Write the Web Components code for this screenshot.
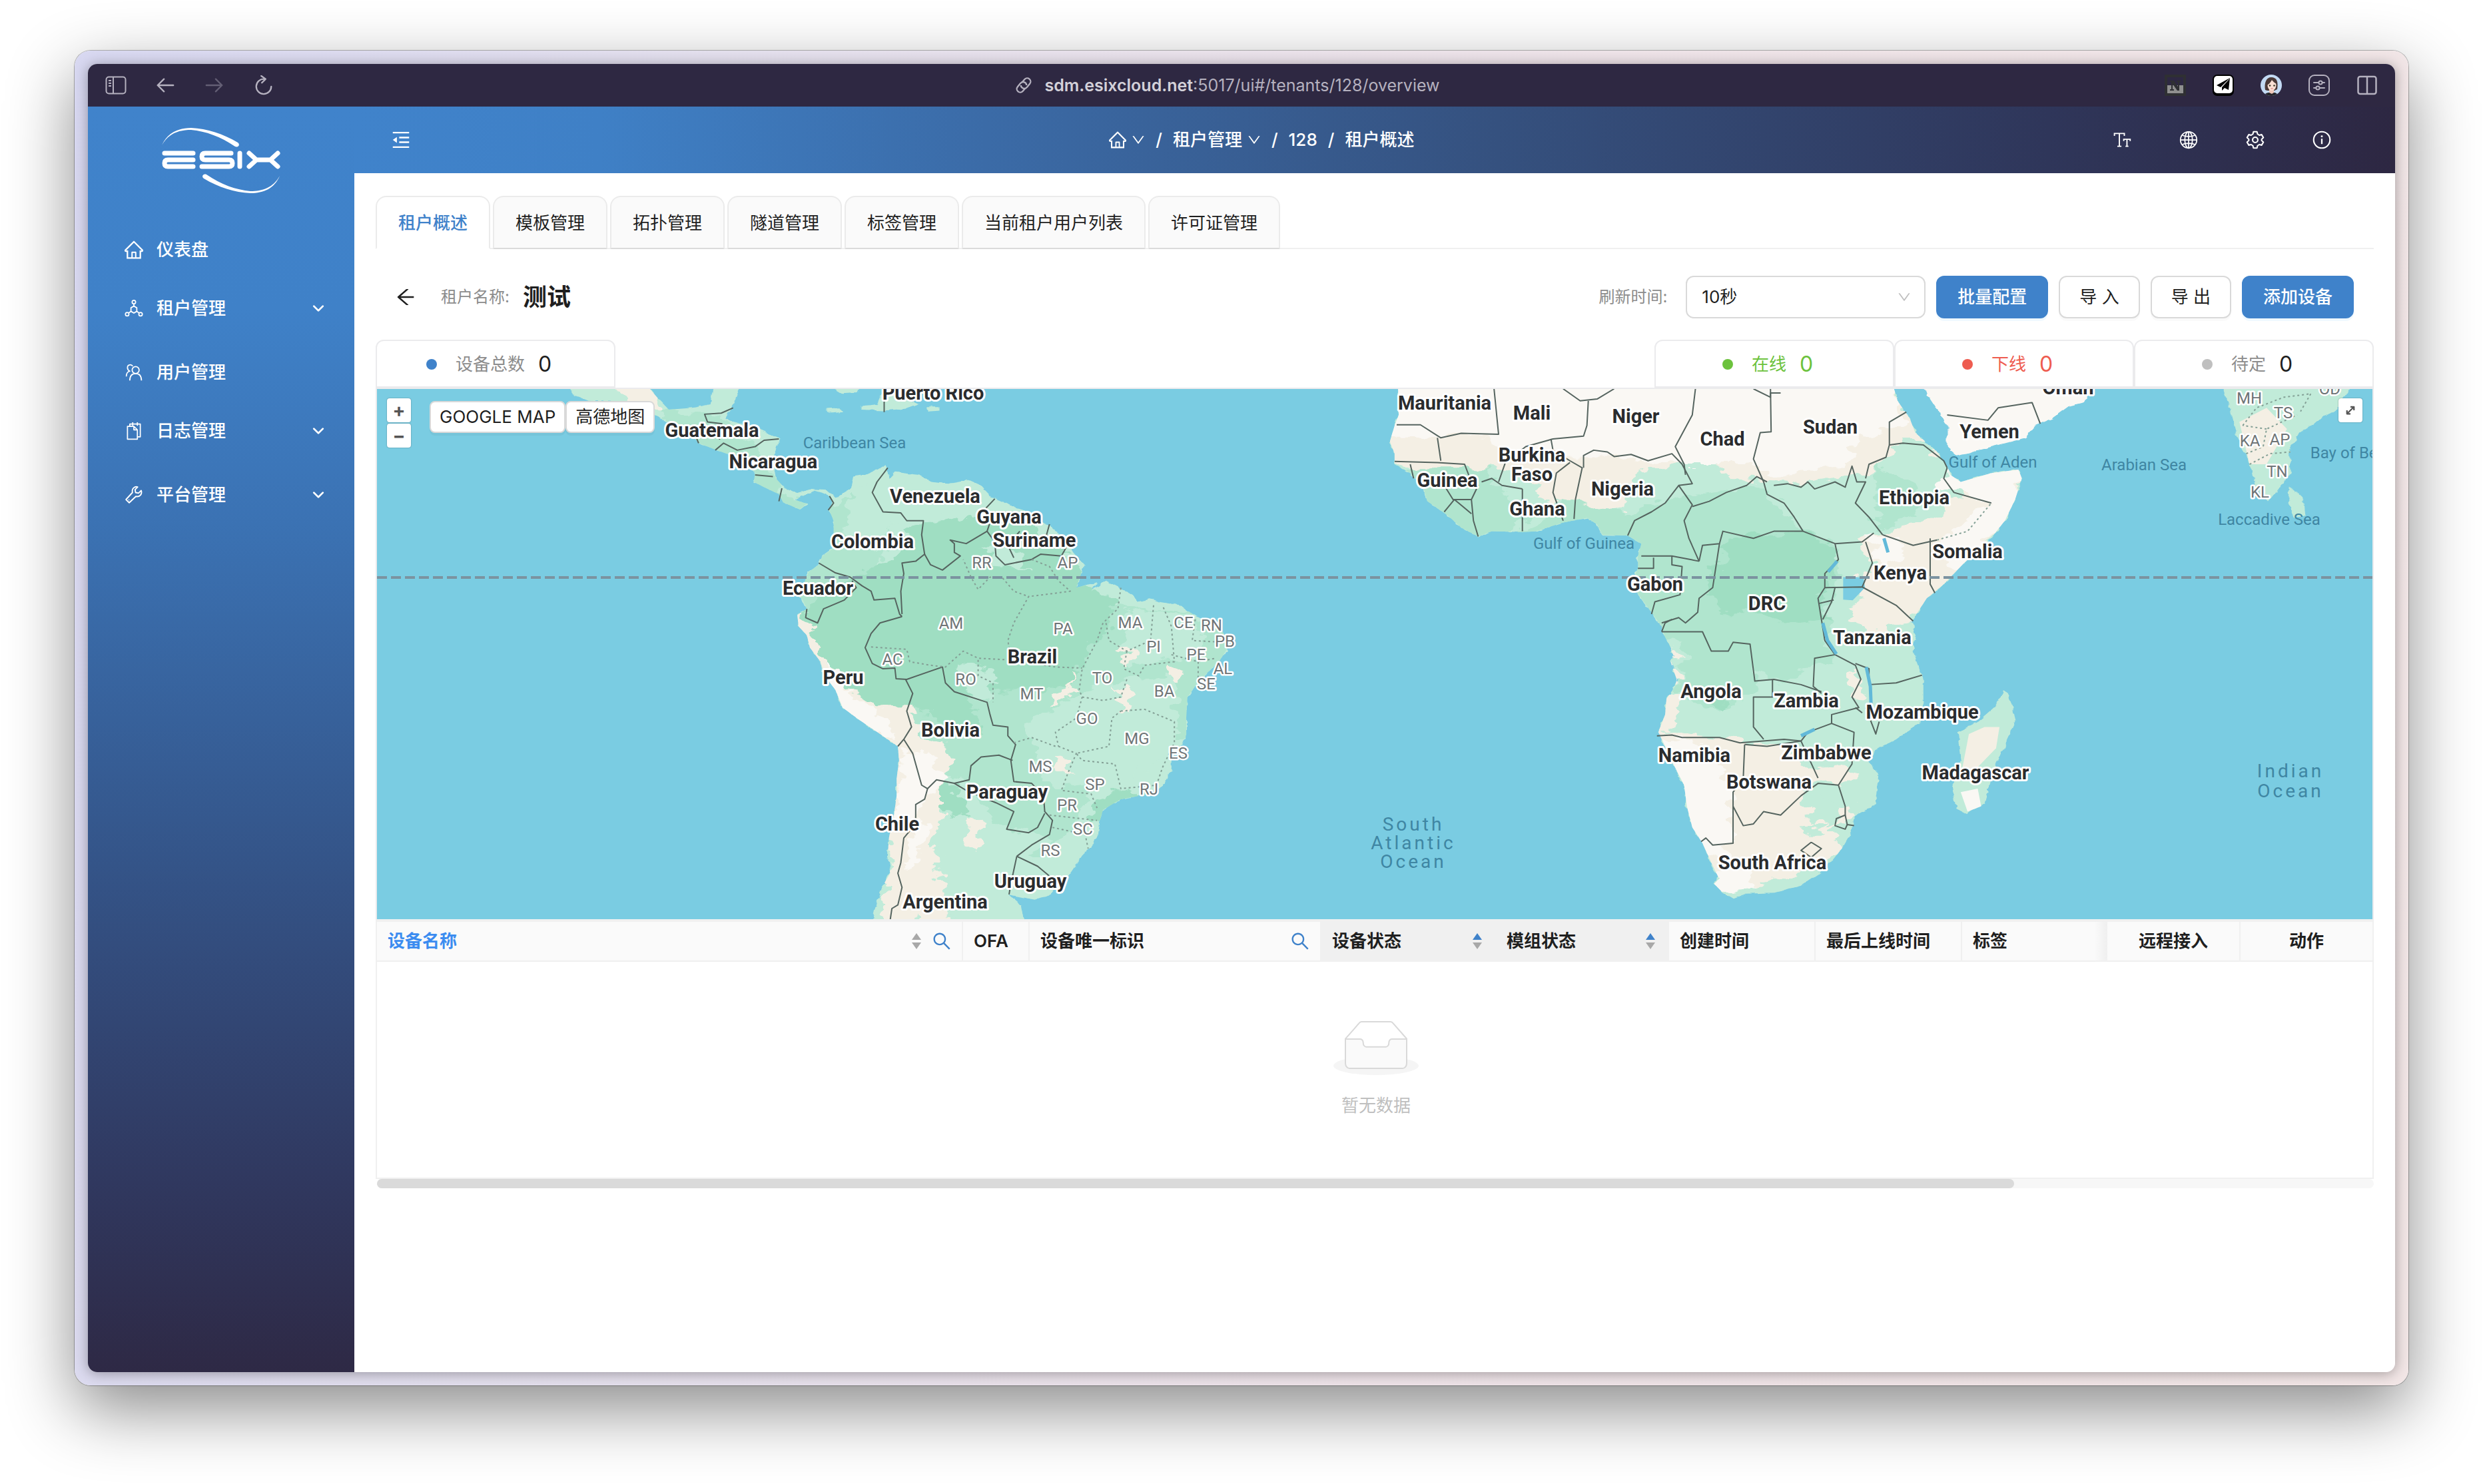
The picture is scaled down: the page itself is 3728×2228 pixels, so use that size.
<!DOCTYPE html>
<html lang="zh-CN">
<head>
<meta charset="utf-8">
<title>租户概述</title>
<style>
  html, body { margin: 0; min-height: 100%; }
  body {
    box-sizing: border-box; min-height: 100vh; display: flex; background: #fff;
    padding: 76px 112px 148px; color: #1f1f1f;
    font: 26px/40px Inter, "Noto Sans CJK SC", sans-serif;
    --brand: #3f82ca; --line: #ebebed;
  }
  browser-window { flex: 1; min-width: 0; }
</style>
</head>
<body>
<browser-window>
  <browser-toolbar slot="toolbar"></browser-toolbar>
  <app-sidebar slot="side">
    <nav-item icon="home">仪表盘</nav-item>
    <nav-item icon="tenants" sub>租户管理</nav-item>
    <nav-item icon="users">用户管理</nav-item>
    <nav-item icon="logs" sub>日志管理</nav-item>
    <nav-item icon="wrench" sub>平台管理</nav-item>
  </app-sidebar>
  <app-header></app-header>
  <tenant-overview></tenant-overview>
</browser-window>

<script>
const ANT = 'viewBox="64 64 896 896" fill="currentColor"';
const LINE = 'viewBox="0 0 32 32" fill="none" stroke="currentColor" stroke-width="2" stroke-linejoin="round"';
const ICONS = {
  home: [ANT, '<path d="M946.5 505L560.1 118.8l-25.9-25.9a31.5 31.5 0 00-44.4 0L77.5 505a63.9 63.9 0 00-18.8 46c.4 35.2 29.7 63.3 64.9 63.3h42.5V940h691.8V614.3h43.4c17.1 0 33.2-6.7 45.3-18.8a63.6 63.6 0 0018.7-45.3c0-17-6.7-33.1-18.8-45.2zM568 868H456V664h112v204zm217.9-325.7V868H632V640c0-22.1-17.9-40-40-40H432c-22.1 0-40 17.9-40 40v228H238.1V542.3h-96l370-369.7 23.1 23.1L882 542.3h-96.1z"/>'],
  down: [ANT, '<path d="M884 256h-75c-5.1 0-9.9 2.5-12.9 6.6L512 654.2 227.9 262.6c-3-4.1-7.8-6.6-12.9-6.6h-75c-6.5 0-10.3 7.4-6.5 12.7l352.6 486.1c12.8 17.6 39 17.6 51.7 0l352.6-486.1c3.9-5.3.1-12.7-6.4-12.7z"/>'],
  search: [ANT, '<path d="M909.6 854.5L649.9 594.8C690.2 542.7 712 479 712 412c0-80.2-31.3-155.4-87.9-212.1-56.6-56.7-132-87.9-212.1-87.9s-155.5 31.3-212.1 87.9C143.2 256.5 112 331.8 112 412c0 80.1 31.3 155.5 87.9 212.1C256.5 680.8 331.8 712 412 712c67 0 130.6-21.8 182.7-62l259.7 259.6a8.2 8.2 0 0011.6 0l43.6-43.5a8.2 8.2 0 000-11.6zM570.4 570.4C528 612.7 471.8 636 412 636s-116-23.3-158.4-65.6C211.3 528 188 471.8 188 412s23.3-116.1 65.6-158.4C296 211.3 352.2 188 412 188s116.1 23.2 158.4 65.6S636 352.2 636 412s-23.3 116.1-65.6 158.4z"/>'],
  back: [ANT, '<path d="M872 474H286.9l350.2-304c5.6-4.9 2.2-14-5.2-14h-88.5c-3.9 0-7.6 1.4-10.5 3.9L155 487.8a31.96 31.96 0 000 48.3L535.1 866c1.5 1.3 3.3 2 5.2 2h91.5c7.4 0 10.8-9.2 5.2-14L286.9 550H872c4.4 0 8-3.6 8-8v-60c0-4.4-3.6-8-8-8z"/>'],
  fold: [LINE, '<path d="M2 3.5h28M13 12h17M13 20h17M2 28.500h28" stroke-width="2.600"/><path d="M9 11v10L2 16z" fill="currentColor" stroke="none"/>'],
  tenants: [LINE, '<circle cx="16" cy="5" r="3"/><path d="M16 8v4"/><path d="M16 12l5 3v6l-5 3-5-3v-6z"/><path d="M11 21l-4 3M21 21l4 3"/><circle cx="4.500" cy="26" r="3"/><circle cx="27.500" cy="26" r="3"/>'],
  users: [LINE, '<circle cx="19" cy="12" r="6"/><path d="M9 30c0-8 4-12 10-12s10 4 10 12M14 5.500C12 2 5 2 5 8c0 3 2 5 4 6-4 1-6 4-6 9"/>'],
  logs: [LINE, '<path d="M5 8h11l6 6v16H5zM16 8v6h6"/><path d="M9 8V4h18v22h-5M14 1v6M22 1v6"/>'],
  wrench: [LINE, '<path d="M28.500 8.500l-4.500 4.500-5-1-1-5L22.500 2.500C18 1 12 4.500 13.500 12L2.500 24l5.500 5.500L19.500 18.500C27 20 30.500 14 28.500 8.500z" stroke-width="2.200"/><path d="M7 24l1 1"/>'],
  chevron: [LINE, '<path d="M4 10l12 12 12-12" stroke-width="5" stroke-linecap="round"/>'],
  panel: [LINE, '<rect x="1.500" y="3.500" width="29" height="25" rx="4"/><path d="M12 4v24M5 9h4M5 13h4M5 17h4"/>'],
  larrow: [LINE, '<path d="M29 16H4M14 6L4 16l10 10" stroke-width="2.500" stroke-linecap="round"/>'],
  rarrow: [LINE, '<path d="M3 16h25M18 6l10 10-10 10" stroke-width="2.500" stroke-linecap="round"/>'],
  reload: [LINE, '<path d="M17 6a12 12 0 1 0 11 12M12 1l7 5-6 6" stroke-width="2.500" stroke-linecap="round"/>'],
  link: [LINE, '<g transform="rotate(-50 16 16)" stroke-width="2.500"><path d="M14 21H8a5.500 5.500 0 0 1 0-11h7a5.500 5.500 0 0 1 4 9.500"/><path d="M18 11h6a5.500 5.500 0 0 1 0 11h-7a5.500 5.500 0 0 1-4-9.500"/></g>'],
  nbox: ['viewBox="0 0 32 32"', '<rect x="2" y="2" width="28" height="28" fill="none" stroke="#2f3033" stroke-width="4"/><rect x="4" y="16" width="24" height="12" fill="#8f8f8f"/><path d="M8 9h6l6 9V11h-2V9h6v2h-2v13h-3L12 14v8h2v2H8v-2h2V11H8z" fill="#2f3033"/>'],
  plane: ['viewBox="0 0 32 32"', '<rect width="32" height="32" rx="7" fill="#000"/><rect x="2" y="2" width="28" height="26" rx="5" fill="#fff"/><path d="M26 5L6 16l6 3zM26 5l-2 18-6-3-4 4v-5L24 8z" fill="#000"/>'],
  avatar: ['viewBox="0 0 32 32"', '<defs><clipPath id="c"><circle cx="16" cy="16" r="16"/></clipPath></defs><g clip-path="url(#c)"><path d="M0 0h32v32H0z" fill="#c3daf4"/><path d="M7 23C5 12 9 4 16 4c8 0 11 6 9 18l-4 2H10z" fill="#4b3a38"/><path d="M13 21h7v8h-7z" fill="#f0c9bb"/><ellipse cx="17" cy="16" rx="6.500" ry="8" fill="#f9ded3"/><path d="M9 16c3-1 6-4 8-8 2 3 5 5 7 6-1-8-5-9-8-9-5 0-8 5-7 11z" fill="#4b3a38"/><circle cx="14" cy="16.500" r="1.300" fill="#332"/><circle cx="20.500" cy="16.500" r="1.300" fill="#332"/><path d="M15.500 21h3" stroke="#d36b6b"/><path d="M5 32c1-4 6-5 8-5l4 2 3-2c3 0 6 2 7 5z" fill="#26262b"/></g>'],
  sliders: [LINE, '<rect x="1" y="1" width="30" height="30" rx="8"/><path d="M8 12h7M21 12h3M8 20h3M17 20h7" stroke-linecap="round"/><circle cx="18" cy="12" r="2.600"/><circle cx="14" cy="20" r="2.600"/>'],
  split: [LINE, '<rect x="2.500" y="3" width="27" height="26" rx="3" stroke-width="2.500"/><path d="M16 3v26" stroke-width="2.500"/>'],
  text: [LINE, '<path d="M3 9V5h17v4M11.500 5v22M8 27h7M19 18v-3h11v3M24.500 15v12M22 27h5" stroke-width="2.200" stroke-linejoin="miter"/>'],
  globe: [LINE, '<circle cx="16" cy="16" r="14"/><ellipse cx="16" cy="16" rx="6.500" ry="14"/><path d="M16 2v28M2 16h28M5 8c6 3 16 3 22 0M5 24c6-3 16-3 22 0"/>'],
  gear: [LINE, '<path d="M13 2h6l1 4 3 2 4-1 3 5-3 3v2l3 3-3 5-4-1-3 2-1 4h-6l-1-4-3-2-4 1-3-5 3-3v-2l-3-3 3-5 4 1 3-2z" stroke-width="2.400"/><circle cx="16" cy="16" r="4.500" stroke-width="2.400"/>'],
  info: [LINE, '<circle cx="16" cy="16" r="14" stroke-width="2.400"/><path d="M16 14v9" stroke-width="2.600"/><circle cx="16" cy="10" r="1.700" fill="currentColor" stroke="none"/>'],
  expand: [LINE, '<path d="M10 22L22 10M16 9h7v7M9 16v7h7" stroke-width="3"/>'],
};

const define = (name, render) => customElements.define(name, class extends HTMLElement {
  connectedCallback() {
    if (!this.shadowRoot) this.attachShadow({ mode: 'open' }).innerHTML = render(this);
  }
});

define('ui-icon', el => {
  const [attrs, body] = ICONS[el.getAttribute('name')];
  const size = el.getAttribute('size') || 28;
  return `<style>:host{display:block;flex:none;width:${size}px;height:${size}px}svg{display:block;width:100%;height:100%}</style><svg ${attrs} aria-hidden="true">${body}</svg>`;
});

define('browser-window', () => `
<style>
  :host { display: flex; box-sizing: border-box; padding: 20px; border-radius: 24px;
    background: linear-gradient(100deg, #d8d8f1, #e3dfed 25%, #eee3e8 60%, #f2e6e6);
    box-shadow: 0 0 0 1px rgba(0,0,0,.28), 0 36px 100px rgba(0,0,0,.46); }
  .page { flex: 1; min-width: 0; display: flex; flex-direction: column; overflow: hidden; border-radius: 14px; background: #fff; }
  .shell { flex: 1; min-width: 0; display: flex; border-radius: 14px; box-shadow: 0 2px 20px rgba(0,0,0,.34); }
  .body { flex: 1; display: flex; min-height: 0; }
  main { flex: 1; min-width: 0; display: flex; flex-direction: column; }
</style>
<div class="shell"><div class="page"><slot name="toolbar"></slot>
<div class="body"><slot name="side"></slot><main><slot></slot></main></div></div></div>`);

define('browser-toolbar', () => `
<style>
  :host { display: grid; grid-template-columns: 31fr auto 32fr; align-items: center; height: 64px; flex: none;
    padding: 0 26px; background: #2e2842; color: #b5b1bf; }
  div { display: flex; align-items: center; gap: 40px; }
  .url { gap: 16px; font-size: 25px; } .right { justify-content: flex-end; }
  button { all: unset; display: flex; width: 32px; justify-content: center; }
  .left { gap: 42px; }
  button:disabled { color: #635e74; }
  b { font-weight: 600; color: #d3d1d9; }
</style>
<div class="left"><button aria-label="侧栏"><ui-icon name="panel" size="32"></ui-icon></button>
<button aria-label="后退"><ui-icon name="larrow" size="30"></ui-icon></button>
<button aria-label="前进" disabled><ui-icon name="rarrow" size="30"></ui-icon></button>
<button aria-label="刷新"><ui-icon name="reload" size="30"></ui-icon></button></div>
<div class="url"><ui-icon name="link" size="30"></ui-icon><span><b>sdm.esixcloud.net</b>:5017/ui#/tenants/128/overview</span></div>
<div class="right">${['nbox', 'plane', 'avatar', 'sliders', 'split'].map(n => `<button aria-label="${n}"><ui-icon name="${n}" size="32"></ui-icon></button>`).join('')}</div>`);

define('app-sidebar', () => `
<style>
  :host { display: flex; flex-direction: column; flex: none; width: 400px; color: #fff;
    background: linear-gradient(#4083cb, #3f81c8 16%, #3b72b3 33%, #345488 60%, #30385f 85%, #2e2945); }
  .logo { display: block; width: 180px; height: 100px; margin: 32px auto 39px 111px; }
  nav { display: flex; flex-direction: column; }
</style>
<svg class="logo" viewBox="0 0 180 100" role="img" aria-label="ESIX" fill="none" stroke="#fff" stroke-width="7" stroke-linecap="round" stroke-linejoin="round">
  <path d="M0 26C8 8 24 0 44 0c24 1 48 9 70 22 4 3 1 8-4 6C88 13 66 5 44 3 26 3 10 8 0 26z" fill="#fff" stroke="none"/>
  <path d="M177 72c-8 19-24 26-44 26-24-1-48-9-70-22-4-3-1-8 4-6 22 15 44 23 66 25 18 0 34-5 44-23z" fill="#fff" stroke="none"/>
  <path d="M4 38h43M47 48H9q-5 0-5 5t5 5h38"/>
  <path d="M104 38H65q-5 0-5 5t5 5h36q5 0 5 5t-5 5H60"/>
  <path d="M117 38v20"/>
  <path d="M131 38l11 10-11 10M174 38l-11 10 11 10M142 48h21"/>
</svg>
<nav><slot></slot></nav>`);

define('nav-item', el => `
<style>
  :host { display: block; padding: 4px 0; } :host([sub]) { padding-bottom: 12px; }
  a { display: flex; align-items: center; height: 80px; padding: 0 45px 0 55px; gap: 20px; color: #fff; text-decoration: none; font-weight: 500; }
  span { flex: 1; }
</style>
<a href="#"><ui-icon name="${el.getAttribute('icon')}" size="28"></ui-icon><span><slot></slot></span>${el.hasAttribute('sub') ? '<ui-icon name="chevron" size="18"></ui-icon>' : ''}</a>`);

define('app-header', () => `
<style>
  :host { display: grid; grid-template-columns: 18fr auto 23fr; align-items: center; height: 100px; flex: none;
    padding: 0 96px 0 56px; color: #fff; font-weight: 500;
    background: linear-gradient(90deg, #4083cb, #3f80c6 12%, #3b6ba7 31%, #35517f 56%, #2f365a 83%, #2d2742); }
  nav, a, .tools { display: flex; align-items: center; }
  nav { gap: 16px; } a { color: inherit; text-decoration: none; gap: 8px; }
  .tools { justify-content: flex-end; gap: 72px; }
  button { all: unset; display: block; }
</style>
<button aria-label="收起菜单"><ui-icon name="fold" size="28"></ui-icon></button>
<nav aria-label="面包屑"><a href="#"><ui-icon name="home" size="26"></ui-icon><ui-icon name="down" size="20"></ui-icon></a><span>/</span>
<a href="#">租户管理<ui-icon name="down" size="20"></ui-icon></a><span>/</span><a href="#">128</a><span>/</span><span>租户概述</span></nav>
<div class="tools">${[['text', '字体'], ['globe', '语言'], ['gear', '设置'], ['info', '关于']].map(([n, l]) => `<button aria-label="${l}"><ui-icon name="${n}" size="28"></ui-icon></button>`).join('')}</div>`);

define('tab-bar', () => `
<style>
  :host { display: flex; gap: 4px; border-bottom: 2px solid #f0f0f0; }
  button { box-sizing: border-box; height: 80px; margin: 0 0 -2px; padding: 2px 32px 0; border: 2px solid #ebebeb; border-bottom-color: #dadada;
    border-radius: 16px 16px 0 0; background: #fafafa; font: inherit; color: inherit; white-space: nowrap; }
  button[aria-selected=true] { background: #fff; border-bottom-color: #fff; color: var(--brand); font-weight: 500; }
</style>
${['租户概述', '模板管理', '拓扑管理', '隧道管理', '标签管理', '当前租户用户列表', '许可证管理'].map((t, i) => `<button role="tab" aria-selected="${!i}">${t}</button>`).join('')}`);

define('stat-card', el => `
<style>
  :host { display: flex; align-items: center; justify-content: center; box-sizing: border-box; width: 360px; height: 72px; gap: 20px;
    padding: 2px 20px 0 0; border: 2px solid var(--line); border-radius: 12px 12px 0 0; color: ${el.getAttribute('tone') || '#8c8c8c'}; }
  i { width: 16px; height: 16px; border-radius: 50%; margin-right: 8px; background: ${el.getAttribute('dot')}; }
  b { font-size: 32px; font-weight: 400; color: ${el.getAttribute('tone') || '#1f1f1f'}; }
</style><i></i><span><slot></slot></span><b>0</b>`);

define('tenant-overview', () => `
<style>
  :host { display: block; padding: 34px 32px; }
  .bar { display: flex; align-items: center; gap: 16px; padding: 0 30px 0 30px; margin: 40px 0 32px; height: 64px; }
  .btn { font: inherit; }
  .back { all: unset; margin-right: 22px; }
  .muted { font-size: 24px; color: #8c8c8c; }
  h1 { margin: 0 auto 0 4px; font-size: 36px; font-weight: 600; line-height: 48px; }
  .select { display: grid; align-items: center; width: 360px; margin-left: 12px; }
  .select > * { grid-area: 1 / 1; }
  .select ui-icon { justify-self: end; margin-right: 22px; color: #bfbfbf; pointer-events: none; }
  select { appearance: none; width: 100%; height: 64px; padding: 0 22px; border: 2px solid #d9d9d9; border-radius: 12px; background: #fff; font: inherit; color: inherit; }
  .btn { height: 64px; padding: 0 29px; border: 2px solid #d9d9d9; border-radius: 12px; background: #fff; color: inherit; white-space: nowrap; box-shadow: 0 4px 0 rgba(0,0,0,.02); }
  .primary { padding: 0 30px; border-color: var(--brand); background: var(--brand); color: #fff; font-weight: 500; box-shadow: 0 4px 0 rgba(5,145,255,.06); }
  .stats { display: flex; } .stats :first-child { margin-right: auto; }
  .map { border: 2px solid var(--line); border-width: 2px 2px 0; }
</style>
<tab-bar role="tablist"></tab-bar>
<div class="bar">
  <button class="back" aria-label="返回"><ui-icon name="back" size="30"></ui-icon></button>
  <span class="muted">租户名称:</span><h1>测试</h1>
  <label class="muted" for="rate">刷新时间:</label>
  <div class="select"><select id="rate"><option>10秒</option></select><ui-icon name="down" size="20"></ui-icon></div>
  <button class="btn primary">批量配置</button><button class="btn">导 入</button><button class="btn">导 出</button><button class="btn primary">添加设备</button>
</div>
<div class="stats"><stat-card dot="#3f82ca">设备总数</stat-card><stat-card dot="#6cc23d" tone="#6cc23d">在线</stat-card><stat-card dot="#ee5c50" tone="#ee5c50">下线</stat-card><stat-card dot="#bfbfbf">待定</stat-card></div>
<div class="map"><world-map></world-map></div>
<device-table></device-table>`);

/* The map is stored as two tiles; each has an origin and a scale on the map canvas. */
const TILES = {
  west: { x: 540, y: 570, sx: 1 / 1.12, sy: 830 / 1568 },
  east: { x: 2000, y: 570, sx: 1600 / 1568, sy: 830 / 1568 },
};
const LABELS = {
  west: {
    country: 'Puerto Rico,964,38|Guatemala,593,144|Nicaragua,696,232|Venezuela,968,330|Guyana,1092,390|Suriname,1135,455|Colombia,862,459|Ecuador,770,592|Brazil,1131,785|Peru,813,845|Bolivia,993,994|Paraguay,1089,1169|Chile,904,1261|Uruguay,1128,1422|Argentina,985,1482',
    state: 'RR,1046,520|AP,1191,520|AM,994,691|PA,1183,707|MA,1296,689|CE,1385,690|RN,1433,697|PB,1455,743|PI,1335,757|PE,1407,781|AL,1452,819|SE,1423,863|BA,1353,885|TO,1249,846|MT,1130,892|AC,896,793|RO,1019,850|GO,1223,961|MG,1307,1018|ES,1377,1060|MS,1145,1097|SP,1237,1148|RJ,1327,1162|PR,1189,1208|SC,1216,1276|RS,1161,1336',
    sea: 'Caribbean Sea,832,180',
  },
  east: {
    country: 'Mauritania,166,66|Mali,294,95|Niger,447,103|Chad,574,169|Sudan,733,135|Yemen,967,148|Oman,1083,23|Burkina,294,214|Faso,294,269|Guinea,170,286|Ghana,302,367|Nigeria,427,309|Ethiopia,857,335|Somalia,935,487|Kenya,836,548|Gabon,475,580|DRC,640,634|Tanzania,795,731|Angola,558,884|Zambia,698,910|Mozambique,868,943|Zimbabwe,727,1057|Namibia,533,1066|Botswana,643,1141|Madagascar,947,1115|South Africa,648,1370',
    state: 'MH,1349,52|TS,1399,95|OD,1468,26|KA,1350,174|AP,1395,170|TN,1391,260|KL,1365,320',
    sea: 'Gulf of Aden,972,235|Arabian Sea,1195,242|Bay of Bengal,1511,208|Laccadive Sea,1379,396|Gulf of Guinea,370,464',
    ocean: 'South,120,1260|Atlantic,120,1313|Ocean,120,1366|Indian,1410,1109|Ocean,1410,1166',
  },
};
const labels = tile => Object.entries(LABELS[tile]).map(([kind, list]) => list.split('|').map(row => {
  const [name, x, y] = row.split(','), t = TILES[tile];
  return `<text class="${kind}" x="${Math.round(t.x + x * t.sx)}" y="${Math.round(t.y + y * t.sy)}">${name}</text>`;
}).join('')).join('');
const place = tile => { const t = TILES[tile]; return `translate(${t.x} ${t.y}) scale(${t.sx} ${t.sy})`; };
const lines = list => list.split('|').map(p => `<polyline points="${p}"/>`).join('');

const SA = '355,26 362,45 385,60 430,62 455,85 490,95 515,120 560,160 570,180 600,200 625,215 665,262 663,290 680,305 705,325 712,348 740,368 752,352 730,340 745,330 765,315 785,325 795,345 790,372 797,400 797,440 795,480 778,500 772,525 755,545 748,575 735,600 745,625 752,650 736,668 738,700 752,725 757,760 775,800 782,840 800,880 812,930 840,965 875,1005 905,1040 907,1080 903,1130 903,1180 898,1240 890,1300 888,1350 892,1400 878,1440 868,1490 862,1534 1117,1534 1112,1495 1105,1480 1090,1460 1100,1463 1135,1475 1160,1462 1170,1440 1195,1400 1215,1350 1235,1315 1242,1290 1245,1250 1250,1220 1280,1190 1320,1178 1350,1155 1365,1110 1365,1070 1390,1020 1390,960 1392,900 1405,870 1420,840 1445,800 1458,765 1455,725 1440,690 1405,670 1380,640 1350,632 1328,622 1310,630 1300,610 1255,570 1230,600 1240,575 1205,590 1218,525 1200,490 1185,450 1160,415 1120,375 1065,335 1045,300 1025,285 990,295 960,290 940,270 900,262 890,280 885,240 870,255 850,270 830,275 825,310 800,335 785,312 760,310 735,322 715,308 700,280 695,230 705,165 670,140 640,125 615,110 628,70 640,20 596,20 590,70 560,80 520,85 500,50 485,20 355,20';
const AF = '97,20 98,100 92,130 85,175 92,210 92,240 115,265 135,310 140,345 170,385 190,420 215,445 235,430 280,432 300,430 340,405 375,392 390,410 398,440 435,442 455,465 450,500 450,535 440,580 455,620 470,660 485,700 490,730 502,780 498,800 507,850 505,870 492,905 490,950 480,1000 490,1040 502,1090 518,1150 522,1210 530,1270 545,1315 558,1370 568,1410 562,1430 575,1455 590,1472 610,1458 650,1455 690,1435 725,1390 750,1330 765,1280 768,1240 800,1205 805,1120 790,1085 800,1050 830,1020 865,970 870,910 870,850 860,800 855,760 860,730 853,685 875,620 900,580 930,520 965,460 990,400 1005,340 1015,280 1010,255 970,265 925,290 910,270 905,245 890,205 858,150 850,110 832,60 826,20';
const INDIA = '1310,20 1320,80 1330,150 1340,200 1355,260 1360,310 1378,345 1392,310 1410,265 1408,200 1425,150 1480,80 1500,20';
const MADA = '990,882 1000,920 1005,970 993,1020 975,1100 960,1200 935,1232 918,1215 912,1150 925,1080 920,1000 950,970 975,930';

define('world-map', () => `
<style>
  :host { display: grid; height: 796px; background: #7acce2; overflow: hidden; }
  :host > * { grid-area: 1 / 1; }
  svg { display: block; width: 100%; height: 100%; min-width: 0; min-height: 0; }
  .land { fill: #c1ebd9; } .mid { fill: #b0e5ce; } .forest { fill: #9fdec2; } .sand { fill: #f4efe4; } .pale { fill: #faf8f4; } .water { fill: #7acce2; }
  .borders, .states { fill: none; stroke: #55645f; stroke-width: 2; stroke-linejoin: round; }
  .lakes { stroke: #62b9d9; stroke-width: 5; }
  .borders *, .states * { vector-effect: non-scaling-stroke; }
  .states { stroke: #84a096; stroke-width: 2; stroke-dasharray: 3 4; }
  text { font-family: Roboto, sans-serif; text-anchor: middle; dominant-baseline: central; paint-order: stroke; stroke-linejoin: round; }
  .country { font-size: 29px; font-weight: 700; fill: #2a2c2e; stroke: #fff; stroke-width: 6px; }
  .state { font-size: 24px; fill: #6f7577; stroke: #fff; stroke-width: 5px; }
  .sea { font-size: 24px; fill: #3f86a3; }
  .ocean { font-size: 28px; fill: #3f86a3; letter-spacing: 4px; }
  .controls { display: flex; align-items: flex-start; padding: 14px 15px; z-index: 1; }
  .zoom { display: flex; flex-direction: column; gap: 2px; margin-right: 28px; }
  .controls button { border: 0; padding: 0; background: #fff; color: #555; box-shadow: 0 0 2px rgba(0,0,0,.4); }
  .zoom button, .full { width: 36px; height: 36px; font: 700 28px/36px Inter, sans-serif; border-radius: 4px; }
  .full { display: grid; place-content: center; margin-left: auto; }
  .controls .src { height: 48px; margin: 4px 0 0; padding: 0 13px; border: 2px solid #d9d9d9; border-radius: 8px; color: #1f1f1f; font: inherit; box-shadow: 0 4px 0 rgba(0,0,0,.04); }
</style>
<svg viewBox="566 584 2996 796" preserveAspectRatio="xMidYMid slice" role="img" aria-label="地图">
<defs><clipPath id="sa"><polygon points="${SA}"/></clipPath><clipPath id="af"><polygon points="${AF}"/></clipPath>
<filter id="rough" x="-5%" y="-5%" width="110%" height="110%"><feTurbulence type="fractalNoise" baseFrequency=".035" numOctaves="3" seed="4"/><feDisplacementMap in="SourceGraphic" scale="46" xChannelSelector="R" yChannelSelector="G"/></filter>
<filter id="coast" x="-2%" y="-2%" width="104%" height="104%"><feTurbulence type="fractalNoise" baseFrequency=".06" numOctaves="2" seed="9"/><feDisplacementMap in="SourceGraphic" scale="9" xChannelSelector="R" yChannelSelector="G"/></filter></defs>
<g transform="${place('west')}">
  <g filter="url(#coast)">
  <polygon class="land" points="${SA}"/>
  <path class="land" d="M795 24h45l-4 14-25 2zM842 75l28-5 8-34 22 4 40 30-20 12-40 6-35-3zM784 82l24-2 4 10-24 4zM955 78l20 0 0 10-20 2z"/>
  </g>
  <g clip-path="url(#sa)"><g filter="url(#rough)">
  <path class="mid" d="M500 80l120 30 60 110 30 100 90 40 40-60 60 60-20 160-60 120 30 120 50 60 200-200 300 40 200 120-30 200-60 60-30-60-220 80-60 200-60 100-60-60-40-140-160-120-60-200z"/>
  <path class="forest" d="M840 545l60-30 20-100 90-20 90-10 90 100 30 90 50 50-10 80-40 60-20 100-60 20-100 0-70 60-90-10-30 60-50 40-70-100-10-120-20-100 50-80zM930 1120l60 20 40 100-40-10zM960 870l60 40 30 100-80-40zM1240 1190l60-30 40 40-110 60z"/>
  <path class="land" d="M830 300l130-10 90 20-70 80-80 0-30 100-60-60zM1050 470l60 10 10 60-50-10zM1010 800l60 30-10 80-50-30zM1250 860l120-20 10 200-100 100-120 20-40-180zM960 1250l100 0 100 60-60 60 60 160-160 0zM1290 650l120 20 0 120-120 20z"/>
  <path class="sand" d="M722 650l34 40 14 80 40 90 60 70 60 0 10 80 40 20 20 60-20 60 0 90-20 70 0 100-40 160-50 0 20-200-12-200 4-110-80-60-60-120-40-170zM1020 1240l30 20-10 80-25-20zM1278 865l18 15-4 70-14-10zM1360 810l20 10 0 40-14 0zM1275 780l25-25 8 16-25 40zM1165 900l25-15 10-65 0 80-40 25zM1170 1070l20 10 10 40-25-10zM430 20l60 0 20 60-50 0zM935 1340l30 0 30 200-60 0z"/>
  <path class="pale" d="M915 1050l40 10 35 70-20 30-60 120-10-80zM790 800l40 100 60 60 10 60-60-40-50-90zM935 1250l25 10-30 130-15-20z"/>
  </g></g>
  <g class="borders">${lines('888,250 870,290 862,320 880,375 910,378 920,400 948,400 945,440 950,495 935,515 912,520 915,550 910,600 912,665|950,495 960,525 980,540 1010,500 1000,490 1000,465 993,455 1020,465 1055,430 1062,395 1050,370 1068,338|1055,430 1068,460 1070,500 1085,525 1130,510 1145,495 1180,500 1190,470|1110,430 1090,470 1100,505|1160,410 1155,440 1175,470|772,520 800,548 825,560 845,585 860,600 865,625 900,620 908,665 912,672|828,570 835,590 815,625 780,650 770,690 750,675 752,650|912,672 875,690 860,720 850,760 862,805 880,820 900,818 902,848 920,850 980,815 985,860 1000,885 1055,915 1060,950 1065,980 1090,985 1090,1010 1103,1035 1095,1080 1100,1140 1130,1145 1150,1180 1152,1225 1165,1250 1160,1290 1130,1320 1105,1352|918,850 930,890 920,940 928,985 915,1020 905,1040|915,1020 930,1060 945,1150 955,1160 970,1135 1000,1145 1025,1135 1028,1095 1045,1070 1075,1065 1098,1080|955,1160 950,1190 935,1205 935,1260 915,1300 910,1370 905,1400 912,1440 905,1490 895,1500 892,1534|1000,1145 1020,1165 1070,1200 1100,1225 1088,1275 1125,1285 1140,1270 1152,1230|1105,1352 1095,1430 1092,1460|1105,1352 1140,1380 1165,1415|628,80 608,95 580,98 585,120 610,125|570,180 565,160|598,200 612,180 635,200 665,190 680,172 705,168|610,130 605,170|665,270 695,275|710,308 705,345|790,330 797,350 788,370|882,40 882,92')}</g>
  <g class="states">${lines('860,758 920,765 925,800 960,810 985,815 1015,770 1040,790 1095,795 1170,815 1215,818|1095,790 1090,740 1100,690 1125,615 1100,600 1080,560 1060,560 1040,595 1028,560 1015,510|1130,510 1160,530 1175,570 1195,600 1150,610 1125,615|1280,590 1275,650 1250,690 1240,740 1215,820 1210,880 1215,900 1205,960 1170,1000 1175,1040|1040,795 1040,840 1065,860 1065,915|1335,640 1330,740 1290,770 1260,740 1255,690|1290,770 1285,820 1310,840 1320,810 1370,800 1365,700 1350,640|1215,900 1250,910 1280,900 1290,850|1365,780 1410,800 1440,790|1405,680 1400,740 1455,745|1410,800 1410,860|1280,940 1320,935 1370,970 1370,1030 1350,1100 1340,1150 1280,1160 1270,1090 1215,1080 1205,1060 1260,1040 1265,960 1280,940|1175,1040 1205,1060 1190,1120 1180,1165 1230,1175 1240,1215|1100,1030 1130,1015 1170,1040|1165,1270 1220,1290 1225,1330|1160,1235 1240,1250')}</g>
</g>
<g transform="${place('east')}">
  <g filter="url(#coast)"><polygon class="land" points="${AF}"/><polygon class="land" points="${INDIA}"/><polygon class="land" points="${MADA}"/>
  <polygon class="pale" points="868,20 885,70 905,130 905,190 920,215 960,195 1020,165 1035,130 1060,110 1085,75 1105,65 1118,20"/><polygon class="land" points="1410,305 1430,340 1432,385 1415,392 1407,350"/></g>
  <g clip-path="url(#af)"><g filter="url(#rough)">
  <path class="mid" d="M110 240l110 0 70 150-30 60-60 20-80-120zM360 300l70 80 60-40 140-40 60 120 60 60-20 200 0 120-80 60-60-100-100-20-50 60-60-200-20-80-90-60zM520 740l90 20 20 120-60 60-60-40zM800 240l60 60 0 80-60 50z"/>
  <path class="forest" d="M580 450l110-20 60 60-30 120 10 70-60 10-50-30-50 0-20-70 20-60zM560 900l20 0 0 40-15-10z"/>
  <path class="sand" d="M60 0h770l30 150 60 60 100 30 0 120-110 230-60 100-70-60-20-60 40-50-20-70 60-30 50-30 30-70-20-90-30-60-30 0-50 100-110 20-90-10-40-50-100 30-20 110-100-40-30-60-70-20-120 0-60-20zM470 1000l130 20 80 30 30 80-20 70 30 20 50-20-30 90 10 60-80 60-60 30-60-20-50-160-40-150zM470 890l40 10-10 100-30 0zM500 760l12 100-20-10zM760 640l60-20 30 60-50 40-30-20zM760 840l10-20 15 90-20-10zM290 290l30-20 10 80-20-10zM690 1120l60-30 20 30-20 40z"/>
  <path class="pale" d="M60 0h770l10 130-60 30-30 90-110 20-20-30-110 0-110-20-120 0-60-60-120 0-60 0zM480 1010l60 20 50 120 0 160-20 60-40-60-20-120zM900 250l120-20-10 150-90 160-30-50 20-60 50-80-60-50zM560 1390l40-10 20 60-50 10zM790 440l40 10 10 50-30 40z"/>
  <path class="land" d="M690 1200l40-20 20 60-20 40zM700 1260l20 0 0 30-20 0z"/>
  </g>
  <path class="water" d="M752 560l30 0 2 30-18 36-14-2z"/></g>
  <path class="sand" d="M960 985l22 0-5 60-35 70-15-10 10-100z"/><path class="pale" d="M925 1170l25-10 5 50-20 15z"/><path class="sand" d="M1335 120l40-40 30 60-30 100-25 0z"/>
  <g class="borders">${lines('95,128 130,128 160,165 190,152 245,155 238,20|155,165 160,230|377,60 375,130 370,160 325,168 285,190 255,235 245,290|340,26 365,60 390,55 415,26|535,20 530,100 505,190 518,240 520,270|370,250 370,215 385,200 405,205 415,218 440,212 465,230 500,210 515,240|322,168 325,200 350,230 368,250 358,340 356,395|350,235 330,265 325,320 340,400|280,310 280,430|220,290 235,280 250,300 280,310|92,232 155,235 195,240 205,290 215,300 205,340 208,400 215,445|115,240 120,280|165,300 178,340 205,340|165,375 180,340 205,380|515,240 530,295 510,300 490,350 470,375 445,400 435,442|510,300 530,355 518,400 525,450 540,515|530,360 555,345 580,320 610,300 625,275 640,290|645,20 646,148 630,150 620,225 635,290 640,325 665,350 680,390 693,430|620,26 645,50 645,38 660,38|650,300 670,295 690,305 700,290 710,310 740,290 755,305 765,245 772,290 785,290 770,350 790,390 810,440|785,280 790,240 815,220 820,185 840,180 870,185 900,230 905,250|820,185 820,120 845,92|693,430 740,465 780,460 797,435|810,440 855,470 890,455|905,250 900,280 915,320 970,350|880,450 880,580 887,605|540,515 545,470 570,465 575,430 620,450 650,430 693,430|740,465 745,510 725,550 725,590 715,620 720,680 725,740 740,780 710,790 708,870 720,890|570,465 560,590 540,620 538,660 520,690 510,675 485,690|455,500 500,500 540,515|500,500 500,525 515,530 512,610 475,630 470,665|450,535 473,535 473,505|485,715 545,715 558,770 583,770 590,745 615,750 622,855 650,850 690,865 720,885|648,850 648,900 620,900 620,985 635,1020|478,1010 500,1008 515,1015 570,1015 600,1030 665,1020 690,1025|607,1035 605,1130 590,1170 590,1315 560,1320 550,1300 543,1310|590,1210 605,1265 620,1260 635,1225 660,1235 690,1180 715,1145 745,1150 765,1090 768,1000 735,975 700,1000 690,1025 715,1130|607,1035 640,1040 690,1025|735,975 735,950 775,930 765,900 778,850 770,810 740,780|770,930 780,945|785,930 800,1005 805,970|790,865 830,860 868,838|770,805 790,820 790,865|725,590 780,588 830,640 855,685|780,588 795,520 785,460|740,590 735,630 722,680|716,635 738,625|745,1150 755,1210 755,1235 742,1245 740,1265 755,1275 758,1262 768,1265|755,1235 758,1262|705,1312 720,1330 705,1355 690,1335 705,1312|905,100 965,115 980,80 1030,65 1042,125|485,715 490,690 500,680')}</g>
  <g class="borders lakes">${lines('722,690 729,740 742,778|786,815 792,870 793,920|743,515 730,545|812,450 818,490|690,1010 710,992')}</g>
  <g class="states">${lines('890,455 935,430 970,350|1340,130 1360,80 1400,50 1440,40|1345,210 1370,190 1375,140 1420,100|1350,240 1380,210 1410,205|1375,140 1340,130|1440,40 1425,90')}</g>
</g>
<path d="M566 867h2996" stroke="#7b93a0" stroke-width="4" stroke-dasharray="15 6"/>
${labels('west')}${labels('east')}
</svg>
<div class="controls"><div class="zoom"><button aria-label="放大">+</button><button aria-label="缩小">−</button></div>
<button class="src">GOOGLE MAP</button><button class="src">高德地图</button><button class="full" aria-label="全屏"><ui-icon name="expand" size="24"></ui-icon></button></div>`);

const sorter = up => `<svg class="sort" viewBox="0 0 20 24" aria-hidden="true"><path d="M10 0l7 10H3z" fill="${up}"/><path d="M10 24l7-10H3z" fill="#a8a8a8"/></svg>`;
const find = '<ui-icon name="search" size="28"></ui-icon>';
define('device-table', () => `
<style>
  :host { display: block; }
  table { width: 100%; table-layout: fixed; border-collapse: separate; border-spacing: 0; border: 2px solid #f0f0f0; border-top-width: 4px; border-bottom: 0; }
  th { box-sizing: border-box; height: 60px; padding: 0 16px; text-align: left; font-weight: 600; background: #fafafa; border-right: 2px solid #f0f0f0; border-bottom: 2px solid #f0f0f0; white-space: nowrap; }
  th:last-child { border-right: 0; }
  th > div { display: flex; align-items: center; gap: 14px; } th span { flex: 1; }
  .sorted { background: #f0f0f0; }
  .name { color: #3b8cf0; } .mid { text-align: center; }
  .edge { background: linear-gradient(90deg, #fafafa 92%, #f0f0f0); }
  .sort { width: 20px; height: 24px; flex: none; } ui-icon { color: var(--brand); }
  td { height: 324px; padding: 0 0 0 4px; border-bottom: 2px solid #f0f0f0; text-align: center; color: #bfbfbf; }
  .empty { display: block; width: 128px; height: 82px; margin: 0 auto 26px; }
  .track { height: 14px; margin-left: 2px; border-radius: 7px; background: #f7f7f7; } .thumb { width: 82%; height: 100%; border-radius: 7px; background: #dadada; }
</style>
<table><colgroup><col><col style="width:100px"><col style="width:438px"><col style="width:262px"><col style="width:260px"><col style="width:220px"><col style="width:220px"><col style="width:218px"><col style="width:200px"><col style="width:198px"></colgroup>
<thead><tr><th class="name"><div><span>设备名称</span>${sorter('#a8a8a8')}${find}</div></th><th>OFA</th><th><div><span>设备唯一标识</span>${find}</div></th>
<th class="sorted"><div><span>设备状态</span>${sorter('#3f82ca')}</div></th><th class="sorted"><div><span>模组状态</span>${sorter('#3f82ca')}</div></th>
<th>创建时间</th><th>最后上线时间</th><th class="edge">标签</th><th class="mid">远程接入</th><th class="mid">动作</th></tr></thead>
<tbody><tr><td colspan="10"><svg class="empty" viewBox="0 0 64 41" aria-hidden="true"><g transform="translate(0 1)" fill="none" fill-rule="evenodd"><ellipse fill="#f5f5f5" cx="32" cy="33" rx="32" ry="7"/><g fill-rule="nonzero" stroke="#d9d9d9"><path d="M55 12.760L44.854 1.258C44.367.474 43.656 0 42.907 0H21.093c-.749 0-1.460.474-1.947 1.257L9 12.761V22h46v-9.240z"/><path d="M41.613 15.931c0-1.605.994-2.930 2.227-2.931H55v18.137C55 33.260 53.680 35 52.050 35h-40.100C10.320 35 9 33.259 9 31.137V13h11.160c1.233 0 2.227 1.323 2.227 2.928v.022c0 1.605 1.005 2.901 2.237 2.901h14.752c1.232 0 2.237-1.308 2.237-2.913v-.007z" fill="#fafafa"/></g></g></svg>暂无数据</td></tr></tbody></table>
<div class="track"><div class="thumb"></div></div>`);
</script>
</body>
</html>
